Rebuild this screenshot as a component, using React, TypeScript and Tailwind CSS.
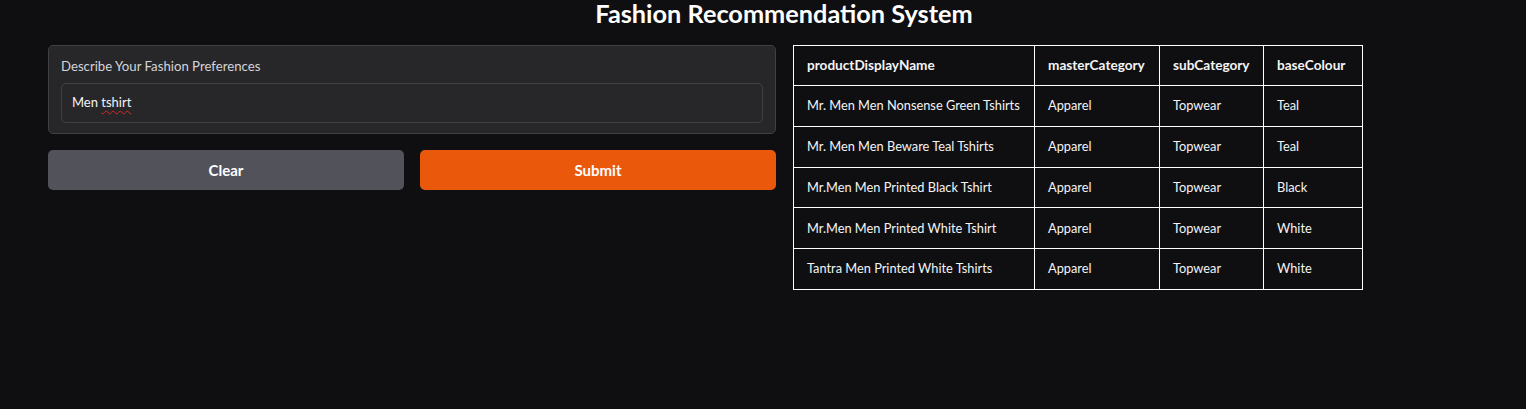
import React from 'react';

const rows = [
  ['Mr. Men Men Nonsense Green Tshirts', 'Apparel', 'Topwear', 'Teal'],
  ['Mr. Men Men Beware Teal Tshirts', 'Apparel', 'Topwear', 'Teal'],
  ['Mr.Men Men Printed Black Tshirt', 'Apparel', 'Topwear', 'Black'],
  ['Mr.Men Men Printed White Tshirt', 'Apparel', 'Topwear', 'White'],
  ['Tantra Men Printed White Tshirts', 'Apparel', 'Topwear', 'White'],
];

const headers = [
  { label: 'productDisplayName', w: 'w-[241px]' },
  { label: 'masterCategory', w: 'w-[125px]' },
  { label: 'subCategory', w: 'w-[104px]' },
  { label: 'baseColour', w: 'w-[99px]' },
];

export default function App() {
  return (
    <div
      className="h-[409px] w-full overflow-hidden bg-[#0f0f11] text-[#f4f4f5]"
      style={{ fontFamily: '"Source Sans Pro", Lato, "Noto Sans", sans-serif' }}
    >
      <div className="ml-[48px] w-[1472px]">
        {/* Title */}
        <h1 className="h-[45px] text-center text-[25.3px] font-bold leading-[26px] text-white">
          Fashion Recommendation System
        </h1>

        <div className="grid grid-cols-2 gap-4">
          {/* Left column */}
          <div className="flex flex-col gap-4">
            <div className="rounded-[5px] border border-[#3f3f46] bg-[#27272a] px-[12px] pb-[10px] pt-[12px]">
              <div className="mb-[9px] text-[13.2px] leading-[16px] text-[#d4d4d8]">
                Describe Your Fashion Preferences
              </div>
              <div className="flex h-[40px] items-center rounded-[5px] border border-[#3f3f46] bg-[#27272a] px-[10px] text-[13px] text-[#f4f4f5]">
                <span>Men&nbsp;</span>
                <span className="underline decoration-wavy decoration-[#dc2626] decoration-1 underline-offset-[3px]">
                  tshirt
                </span>
              </div>
            </div>

            <div className="flex gap-4">
              <button className="h-[40px] flex-1 rounded-[5px] bg-[#52525b] text-[15px] font-bold text-white">
                Clear
              </button>
              <button className="h-[40px] flex-1 rounded-[5px] bg-[#ea580c] text-[15px] font-bold text-white">
                Submit
              </button>
            </div>
          </div>

          {/* Right column: results table */}
          <div className="pl-[1px]">
            <table className="table-fixed border-collapse text-[12.8px] text-[#f4f4f5]">
              <thead>
                <tr>
                  {headers.map((h) => (
                    <th
                      key={h.label}
                      className={`${h.w} h-[40px] border border-white px-[13px] text-left text-[13.6px] font-bold`}
                    >
                      {h.label}
                    </th>
                  ))}
                </tr>
              </thead>
              <tbody>
                {rows.map((r, i) => (
                  <tr key={i}>
                    {r.map((c, j) => (
                      <td key={j} className="h-[40.8px] border border-white px-[13px]">
                        {c}
                      </td>
                    ))}
                  </tr>
                ))}
              </tbody>
            </table>
          </div>
        </div>
      </div>
    </div>
  );
}
